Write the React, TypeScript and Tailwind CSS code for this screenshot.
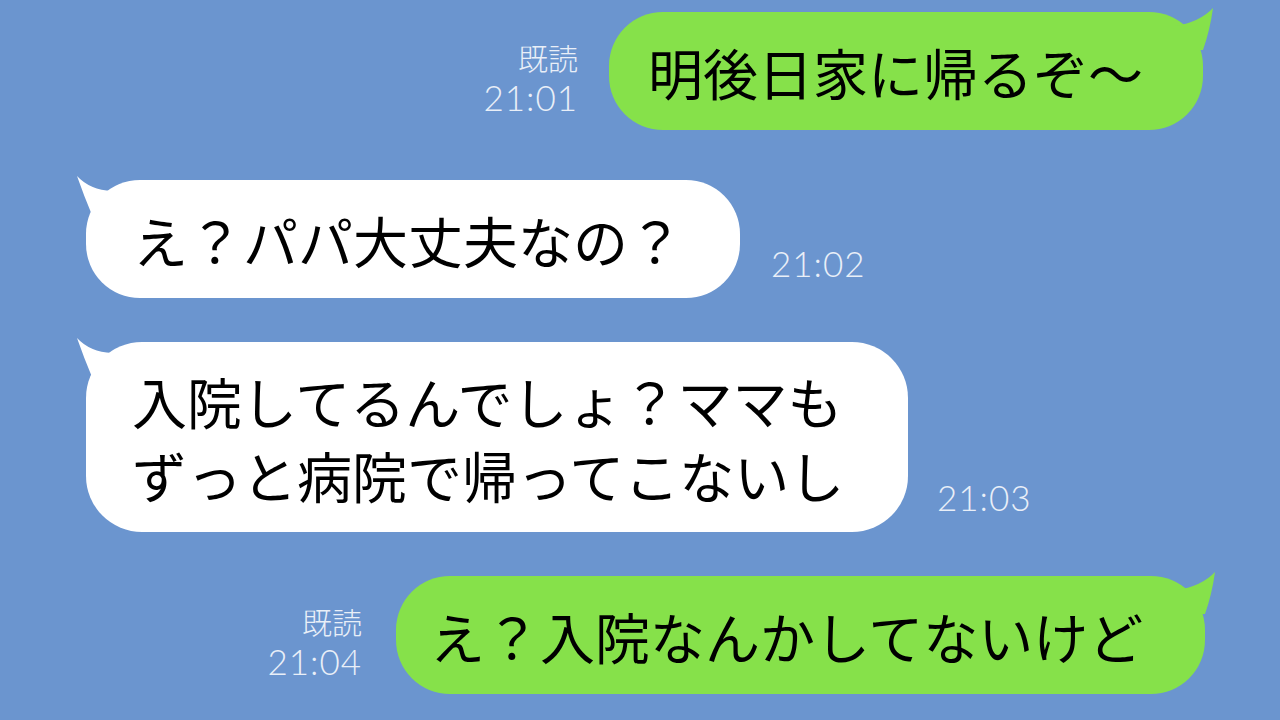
import React from "react";

const jp = { fontFamily: '"Noto Sans CJK JP", "Noto Sans", sans-serif' };

function GreenTail() {
  return (
    <svg
      className="absolute right-[-14px] top-[-8px]"
      width="44"
      height="50"
      viewBox="0 0 44 50"
    >
      <path d="M2 22 Q27 18 40 4 Q37 26 30 46 L2 46 Z" fill="#86e14a" />
    </svg>
  );
}

function WhiteTail() {
  return (
    <svg
      className="absolute left-[-12px] top-[-8px]"
      width="42"
      height="46"
      viewBox="0 0 42 46"
    >
      <path d="M38 19 Q16 18 3 4 Q10 24 18 43 L38 43 Z" fill="#ffffff" />
    </svg>
  );
}

function ReadLabel({ time }: { time: string }) {
  return (
    <div className="flex flex-col items-end text-[#e9eff8] mb-[12px]">
      <span className="text-[30px] leading-[38px] font-light" style={jp}>
        既読
      </span>
      <span
        className="text-[35px] leading-[42px] font-light tracking-[1px]"
        style={{ fontFamily: 'Lato, "Liberation Sans", sans-serif' }}
      >
        {time}
      </span>
    </div>
  );
}

function TimeLabel({ time }: { time: string }) {
  return (
    <span
      className="text-[35px] leading-[42px] font-light tracking-[1px] text-[#e9eff8] mb-[14px]"
      style={{ fontFamily: 'Lato, "Liberation Sans", sans-serif' }}
    >
      {time}
    </span>
  );
}

export default function App() {
  return (
    <div className="w-[1280px] h-[720px] bg-[#6b95cf] overflow-hidden pt-[12px] flex flex-col">
      {/* 1 */}
      <div className="flex justify-end items-end gap-[31px] pr-[77px]">
        <ReadLabel time="21:01" />
        <div
          className="relative w-[594px] h-[118px] rounded-[54px] bg-[#86e14a] flex items-center pl-[39px] text-[55px] text-black"
          style={jp}
        >
          <GreenTail />
          <span className="relative">明後日家に帰るぞ〜</span>
        </div>
      </div>

      {/* 2 */}
      <div className="flex items-end gap-[31px] pl-[86px] mt-[50px]">
        <div
          className="relative w-[654px] h-[118px] rounded-[54px] bg-white flex items-center pl-[47px] text-[55px] text-black"
          style={jp}
        >
          <WhiteTail />
          <span className="relative">え？パパ大丈夫なの？</span>
        </div>
        <TimeLabel time="21:02" />
      </div>

      {/* 3 */}
      <div className="flex items-end gap-[29px] pl-[86px] mt-[44px]">
        <div
          className="relative w-[822px] h-[190px] rounded-[56px] bg-white flex items-center pl-[46px] text-[55px] leading-[74px] text-black"
          style={jp}
        >
          <WhiteTail />
          <span className="relative">
            入院してるんでしょ？ママも
            <br />
            ずっと病院で帰ってこないし
          </span>
        </div>
        <TimeLabel time="21:03" />
      </div>

      {/* 4 */}
      <div className="flex justify-end items-end gap-[34px] pr-[75px] mt-[44px]">
        <ReadLabel time="21:04" />
        <div
          className="relative w-[809px] h-[118px] rounded-[54px] bg-[#86e14a] flex items-center pl-[34px] text-[55px] text-black"
          style={jp}
        >
          <GreenTail />
          <span className="relative">え？入院なんかしてないけど</span>
        </div>
      </div>
    </div>
  );
}
